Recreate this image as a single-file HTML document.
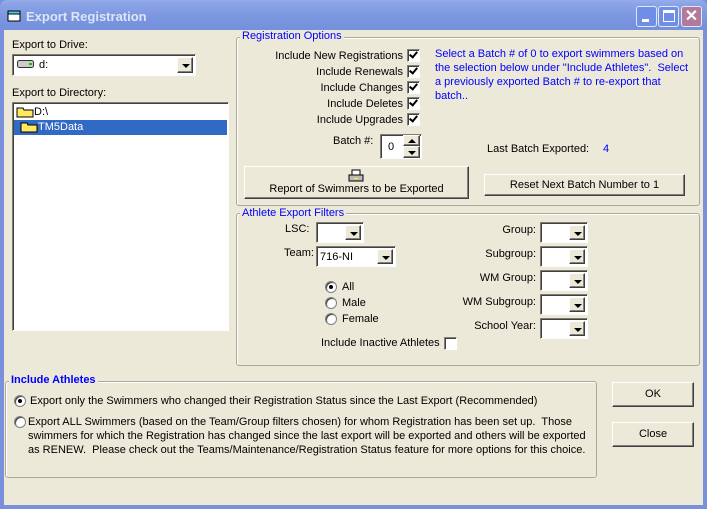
<!DOCTYPE html>
<html><head><style>
*{margin:0;padding:0;box-sizing:border-box}
body{width:707px;height:509px;overflow:hidden;background:#7a90dc;font-family:"Liberation Sans",sans-serif;font-size:11px;color:#000;position:relative}
.a{position:absolute;white-space:nowrap}
#title{left:0;top:0;width:707px;height:30px;background:linear-gradient(#95acea,#8aa2e6 15%,#7a96df 60%,#7590dc);border-radius:7px 7px 0 0}
#client{left:4px;top:30px;width:699px;height:475px;background:#ece9d8}
.grp{position:absolute;border:1px solid #aca899;border-radius:3px;box-shadow:inset 1px 1px #fff}
.leg{position:absolute;background:#ece9d8;color:#0000ff;padding:0 2px;font-size:11px}
.sunk{position:absolute;background:#fff;border:1px solid;border-color:#7f7d73 #fff #fff #7f7d73;box-shadow:inset 1px 1px #404040}
.dd{position:absolute;right:2px;top:2px;bottom:2px;width:16px;background:#ece9d8;border:1px solid;border-color:#fff #404040 #404040 #fff;box-shadow:inset -1px -1px #808080}
.dd:after{content:"";position:absolute;left:4px;top:6px;border:4px solid transparent;border-top:4px solid #000;border-bottom:0}
.cb{position:absolute;width:13px;height:13px;background:#fff;border:1px solid;border-color:#808080 #fff #fff #808080;box-shadow:inset 1px 1px #404040}
.cb.k:after{content:"";position:absolute;left:3px;top:0px;width:3px;height:6px;border:solid #000;border-width:0 2px 2px 0;transform:rotate(40deg)}
.rb{position:absolute;width:12px;height:12px;border-radius:50%;background:#fff;border:1px solid #808080;box-shadow:inset 1px 1px #404040}
.rb.k:after{content:"";position:absolute;left:3px;top:3px;width:4px;height:4px;border-radius:50%;background:#000}
.btn{position:absolute;background:#ece9d8;border:1px solid;border-color:#fff #404040 #404040 #fff;box-shadow:inset -1px -1px #808080;text-align:center}
.r{text-align:right}
.b{color:#0000ff}
.tb{position:absolute;top:6px;width:21px;height:21px;border:1px solid #e0e8fa;border-radius:3px;background:#6f8fe6}
</style></head><body>
<div class="a" id="title"></div>
<svg class="a" style="left:7px;top:10px" width="14" height="12"><rect x="1" y="1" width="12" height="10" fill="#fff" stroke="#000"/><rect x="1" y="1" width="12" height="3" fill="#4ad0f0" stroke="#000"/></svg>
<div class="a" style="left:26px;top:9px;color:#dce6f8;font-weight:bold;font-size:13px">Export Registration</div>
<div class="tb" style="left:636px"><div class="a" style="left:5px;top:12px;width:7px;height:3px;background:#fff"></div></div>
<div class="tb" style="left:658px"><div class="a" style="left:4px;top:3px;width:12px;height:12px;border:1px solid #fff;border-top-width:3px"></div></div>
<div class="tb" style="left:681px;background:#b07a9a;color:#fff;font-size:16px;font-weight:bold;text-align:center;line-height:19px">✕</div>
<div class="a" id="client"></div>

<div class="a" style="left:12px;top:39px">Export to Drive:</div>
<div class="sunk" style="left:12px;top:54px;width:184px;height:22px"><svg class="a" style="left:4px;top:5px" width="18" height="9"><rect x="0.5" y="0.5" width="16" height="7" rx="2" fill="#ccc" stroke="#333"/><rect x="12" y="3" width="3" height="2" fill="#0c0"/></svg><div class="a" style="left:26px;top:4px">d:</div><div class="dd"></div></div>
<div class="a" style="left:12px;top:87px">Export to Directory:</div>
<div class="sunk" style="left:12px;top:102px;width:217px;height:229px">
<svg class="a" style="left:3px;top:3px" width="18" height="12"><path d="M1 2h6l1 2h9v7H1z" fill="#ffe860" stroke="#000"/></svg>
<div class="a" style="left:21px;top:3px">D:\</div>
<div class="a" style="left:1px;top:17px;width:213px;height:15px;background:#316ac5"></div>
<svg class="a" style="left:7px;top:18px" width="18" height="12"><path d="M1 2h6l1 2h9v7H1z" fill="#ffe860" stroke="#000"/></svg>
<div class="a" style="left:25px;top:18px;color:#fff">TM5Data</div>
</div>

<div class="grp" style="left:236px;top:37px;width:464px;height:169px"></div>
<div class="leg a" style="left:240px;top:30px">Registration Options</div>
<div class="a r" style="left:250px;top:48px;width:153px;line-height:16px">Include New Registrations<br>Include Renewals<br>Include Changes<br>Include Deletes<br>Include Upgrades</div>
<div class="cb k" style="left:407px;top:49px"></div><div class="cb k" style="left:407px;top:65px"></div><div class="cb k" style="left:407px;top:81px"></div><div class="cb k" style="left:407px;top:97px"></div><div class="cb k" style="left:407px;top:113px"></div>
<div class="a b" style="left:435px;top:47px;line-height:14px">Select a Batch # of 0 to export swimmers based on<br>the selection below under "Include Athletes".&nbsp; Select<br>a previously exported Batch # to re-export that<br>batch..</div>
<div class="a" style="left:333px;top:135px">Batch #:</div>
<div class="sunk" style="left:380px;top:134px;width:42px;height:25px"><div class="a" style="left:7px;top:6px">0</div>
<div class="btn" style="left:22px;top:0;width:17px;height:11px"><div class="a" style="left:4px;top:3px;border:4px solid transparent;border-bottom:4px solid #000;border-top:0"></div></div>
<div class="btn" style="left:22px;top:11px;width:17px;height:12px"><div class="a" style="left:4px;top:4px;border:4px solid transparent;border-top:4px solid #000;border-bottom:0"></div></div></div>
<div class="a" style="left:487px;top:143px">Last Batch Exported:</div>
<div class="a b" style="left:603px;top:143px">4</div>
<div class="btn" style="left:244px;top:166px;width:225px;height:33px"><svg class="a" style="left:103px;top:2px" width="16" height="14"><rect x="4" y="1" width="8" height="5" fill="#fff" stroke="#000"/><rect x="1" y="6" width="14" height="6" fill="#bbb" stroke="#000"/><rect x="6" y="9" width="4" height="1" fill="#ff0"/></svg><div class="a" style="left:0;right:0;top:16px">Report of Swimmers to be Exported</div></div>
<div class="btn" style="left:484px;top:174px;width:201px;height:22px;line-height:20px">Reset Next Batch Number to 1</div>

<div class="grp" style="left:236px;top:213px;width:464px;height:153px"></div>
<div class="leg a" style="left:240px;top:207px">Athlete Export Filters</div>
<div class="a" style="left:285px;top:223px">LSC:</div>
<div class="sunk" style="left:316px;top:222px;width:48px;height:21px"><div class="dd"></div></div>
<div class="a" style="left:284px;top:247px">Team:</div>
<div class="sunk" style="left:316px;top:246px;width:80px;height:21px"><div class="a" style="left:3px;top:4px">716-NI</div><div class="dd"></div></div>
<div class="rb k" style="left:325px;top:281px"></div><div class="a" style="left:342px;top:281px">All</div>
<div class="rb" style="left:325px;top:297px"></div><div class="a" style="left:342px;top:297px">Male</div>
<div class="rb" style="left:325px;top:313px"></div><div class="a" style="left:342px;top:313px">Female</div>
<div class="a" style="left:321px;top:337px">Include Inactive Athletes</div>
<div class="cb" style="left:444px;top:337px"></div>
<div class="a r" style="left:436px;top:218px;width:100px;line-height:24px">Group:<br>Subgroup:<br>WM Group:<br>WM Subgroup:<br>School Year:</div>
<div class="sunk" style="left:540px;top:222px;width:48px;height:21px"><div class="dd"></div></div>
<div class="sunk" style="left:540px;top:246px;width:48px;height:21px"><div class="dd"></div></div>
<div class="sunk" style="left:540px;top:270px;width:48px;height:21px"><div class="dd"></div></div>
<div class="sunk" style="left:540px;top:294px;width:48px;height:21px"><div class="dd"></div></div>
<div class="sunk" style="left:540px;top:318px;width:48px;height:21px"><div class="dd"></div></div>

<div class="grp" style="left:5px;top:381px;width:592px;height:97px"></div>
<div class="leg a" style="left:9px;top:374px;font-weight:bold">Include Athletes</div>
<div class="rb k" style="left:14px;top:395px"></div>
<div class="a" style="left:30px;top:395px">Export only the Swimmers who changed their Registration Status since the Last Export (Recommended)</div>
<div class="rb" style="left:14px;top:416px"></div>
<div class="a" style="left:28px;top:415px;line-height:14px">Export ALL Swimmers (based on the Team/Group filters chosen) for whom Registration has been set up.&nbsp; Those<br>swimmers for which the Registration has changed since the last export will be exported and others will be exported<br>as RENEW.&nbsp; Please check out the Teams/Maintenance/Registration Status feature for more options for this choice.</div>
<div class="btn" style="left:612px;top:382px;width:82px;height:25px;line-height:23px">OK</div>
<div class="btn" style="left:612px;top:422px;width:82px;height:25px;line-height:23px">Close</div>
</body></html>
